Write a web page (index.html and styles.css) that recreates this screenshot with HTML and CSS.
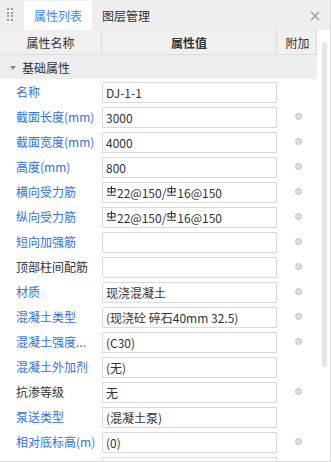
FILE: index.html
```html
<!DOCTYPE html>
<html lang="zh">
<head>
<meta charset="utf-8">
<title>属性列表</title>
<link rel="stylesheet" href="styles.css">
</head>
<body>
<div class="panel">
  <div class="tabbar">
    <div class="grip">
      <span></span><span></span><span></span><span></span>
      <span></span><span></span><span></span><span></span>
    </div>
    <div class="tab active">属性列表</div>
    <div class="tab">图层管理</div>
    <div class="spacer"></div>
    <svg class="close" width="10" height="10" viewBox="0 0 10 10"><path d="M1 1L9 9M9 1L1 9" stroke="#9a9a9a" stroke-width="1.3" fill="none"/></svg>
  </div>
  <div class="body">
    <div class="grid">
      <div class="head">
        <div class="hc c1">属性名称</div>
        <div class="hc c2">属性值</div>
        <div class="hc c3">附加</div>
      </div>
      <div class="section">
        <svg class="tri" width="6" height="4" viewBox="0 0 6 4"><path d="M0 0H6L3 4Z" fill="#8a8a8a"/></svg>
        <span>基础属性</span>
      </div>

      <div class="row"><div class="label blue">名称</div><div class="val"><div class="box">DJ-1-1</div></div><div class="extra"></div></div>
      <div class="row"><div class="label blue">截面长度(mm)</div><div class="val"><div class="box">3000</div></div><div class="extra"><i class="dot"></i></div></div>
      <div class="row"><div class="label blue">截面宽度(mm)</div><div class="val"><div class="box">4000</div></div><div class="extra"><i class="dot"></i></div></div>
      <div class="row"><div class="label blue">高度(mm)</div><div class="val"><div class="box">800</div></div><div class="extra"><i class="dot"></i></div></div>
      <div class="row"><div class="label blue">横向受力筋</div><div class="val"><div class="box"><svg class="bar" width="9" height="10" viewBox="0 0 9 10"><path d="M4.5 0V8M1 2.5H8V6H1Z M0 9.3H9" stroke="#333" stroke-width="1.1" fill="none"/></svg>22@150/<svg class="bar" width="9" height="10" viewBox="0 0 9 10"><path d="M4.5 0V8M1 2.5H8V6H1Z M0 9.3H9" stroke="#333" stroke-width="1.1" fill="none"/></svg>16@150</div></div><div class="extra"><i class="dot"></i></div></div>
      <div class="row"><div class="label blue">纵向受力筋</div><div class="val"><div class="box"><svg class="bar" width="9" height="10" viewBox="0 0 9 10"><path d="M4.5 0V8M1 2.5H8V6H1Z M0 9.3H9" stroke="#333" stroke-width="1.1" fill="none"/></svg>22@150/<svg class="bar" width="9" height="10" viewBox="0 0 9 10"><path d="M4.5 0V8M1 2.5H8V6H1Z M0 9.3H9" stroke="#333" stroke-width="1.1" fill="none"/></svg>16@150</div></div><div class="extra"><i class="dot"></i></div></div>
      <div class="row"><div class="label blue">短向加强筋</div><div class="val"><div class="box"></div></div><div class="extra"><i class="dot"></i></div></div>
      <div class="row"><div class="label">顶部柱间配筋</div><div class="val"><div class="box"></div></div><div class="extra"><i class="dot"></i></div></div>
      <div class="row"><div class="label blue">材质</div><div class="val"><div class="box">现浇混凝土</div></div><div class="extra"><i class="dot"></i></div></div>
      <div class="row"><div class="label blue">混凝土类型</div><div class="val"><div class="box">(现浇砼 碎石40mm 32.5)</div></div><div class="extra"><i class="dot"></i></div></div>
      <div class="row"><div class="label blue">混凝土强度...</div><div class="val"><div class="box">(C30)</div></div><div class="extra"><i class="dot"></i></div></div>
      <div class="row"><div class="label blue">混凝土外加剂</div><div class="val"><div class="box">(无)</div></div><div class="extra"></div></div>
      <div class="row"><div class="label">抗渗等级</div><div class="val"><div class="box">无</div></div><div class="extra"><i class="dot"></i></div></div>
      <div class="row"><div class="label blue">泵送类型</div><div class="val"><div class="box">(混凝土泵)</div></div><div class="extra"></div></div>
      <div class="row"><div class="label blue">相对底标高(m)</div><div class="val"><div class="box">(0)</div></div><div class="extra"><i class="dot"></i></div></div>
      <div class="row"><div class="label blue"></div><div class="val"><div class="box"></div></div><div class="extra"></div></div>
    </div>
    <div class="scroll"><div class="thumb"></div></div>
  </div>
</div>
</body>
</html>
```

FILE: styles.css
```css
html, body {
  margin: 0;
  padding: 0;
  background: #ffffff;
}
body {
  font-family: "Noto Sans CJK SC", "Noto Sans", sans-serif;
  font-size: 12px;
  color: #333333;
}
.panel {
  width: 331px;
  height: 462px;
  box-sizing: border-box;
  border-right: 1px solid #dcdcdc;
  border-bottom: 1px solid #dcdcdc;
  overflow: hidden;
  display: flex;
  flex-direction: column;
}
.tabbar {
  height: 30px;
  flex: none;
  background: #eeeeee;
  display: flex;
  align-items: stretch;
}
.grip {
  width: 24px;
  box-sizing: border-box;
  padding: 8px 0 0 7px;
  display: grid;
  grid-template-columns: 2px 2px;
  grid-auto-rows: 2px;
  column-gap: 2px;
  row-gap: 1.6px;
  align-content: start;
}
.grip span {
  background: #9c9c9c;
  width: 2px;
  height: 2px;
}
.tab {
  width: 68px;
  display: flex;
  align-items: center;
  justify-content: center;
  margin-top: 1px;
  color: #333333;
  font-size: 12px;
}
.tab.active {
  background: #ffffff;
  color: #3a88f5;
}
.spacer { flex: 1; }
.close {
  align-self: center;
  margin-right: 10px;
  margin-top: 1px;
}
.body {
  flex: 1;
  display: flex;
  min-height: 0;
}
.grid {
  width: 317px;
  flex: none;
}
.head {
  height: 25px;
  display: flex;
  background: #f0f0f0;
  border-bottom: 1px solid #dddddd;
  box-sizing: border-box;
}
.hc {
  display: flex;
  align-items: center;
  justify-content: center;
  color: #333333;
  box-sizing: border-box;
}
.c1 { width: 102px; border-right: 1px solid #d8d8d8; }
.c2 { width: 175px; border-right: 1px solid #d8d8d8; font-weight: bold; }
.c3 { flex: 1; padding-left: 2px; border-right: 1px solid #d8d8d8; }
.section {
  height: 24px;
  background: #eeeeee;
  display: flex;
  align-items: center;
  padding-left: 10px;
  font-size: 12px;
  color: #333333;
}
.tri { margin-right: 6px; margin-top: 1px; }
.row {
  height: 25px;
  display: flex;
  align-items: flex-start;
}
.label {
  width: 102px;
  box-sizing: border-box;
  padding-left: 16px;
  height: 25px;
  line-height: 25px;
  white-space: nowrap;
  overflow: hidden;
  color: #333333;
}
.label.blue { color: #2e72e6; }
.val {
  width: 175px;
  padding-top: 3px;
}
.box {
  height: 21px;
  box-sizing: border-box;
  border: 1px solid #dadada;
  padding-left: 3px;
  line-height: 19px;
  white-space: nowrap;
  color: #333333;
  display: flex;
  align-items: center;
}
.bar {
  margin: 0 1px 0 1px;
  position: relative;
  top: -2px;
}
.extra {
  flex: 1;
  height: 25px;
  display: flex;
  align-items: center;
  justify-content: center;
  padding-left: 2px;
}
.dot {
  width: 7px;
  height: 7px;
  box-sizing: border-box;
  border-radius: 50%;
  background: #dedede;
  border: 1px solid #c2c2c2;
}
.scroll {
  flex: 1;
  padding-top: 12px;
  padding-left: 5px;
}
.thumb {
  width: 5px;
  height: 325px;
  border-radius: 3px;
  background: #e6e6e6;
}
```
